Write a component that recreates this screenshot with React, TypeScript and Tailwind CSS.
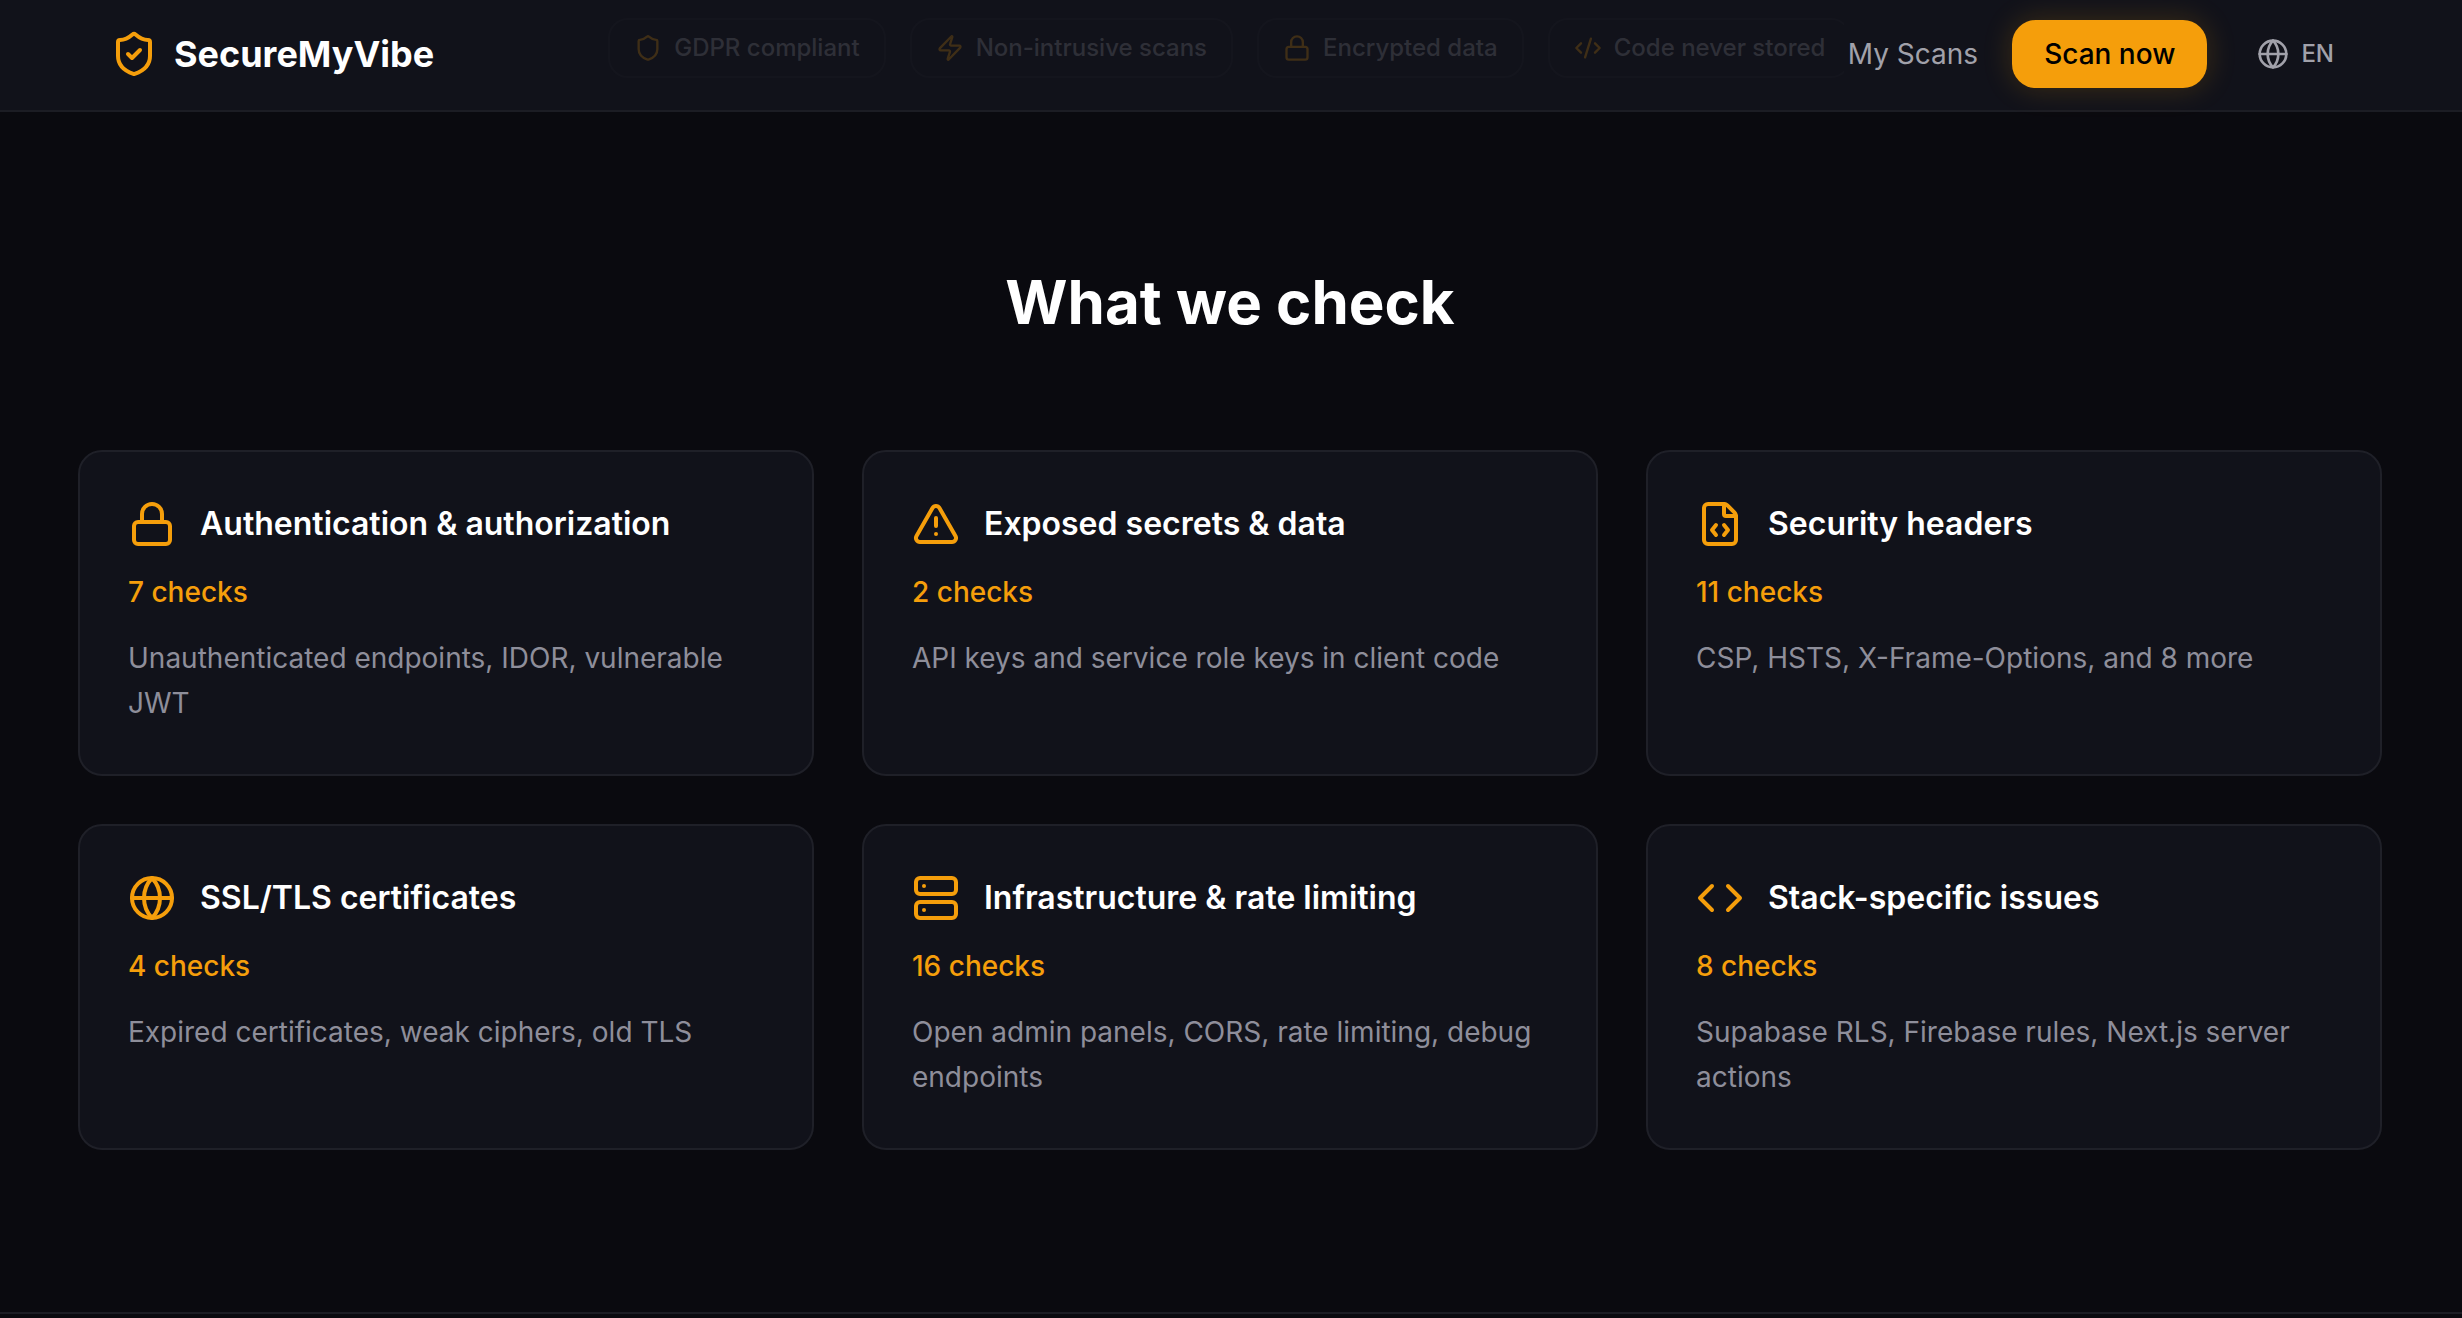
import { Code, CodeXml, FileCode, Globe, Lock, Server, Shield, ShieldCheck, TriangleAlert, Zap } from "lucide-react"

const badges = [
  { icon: Shield, label: "GDPR compliant" },
  { icon: Zap, label: "Non-intrusive scans" },
  { icon: Lock, label: "Encrypted data" },
  { icon: CodeXml, label: "Code never stored" },
]

const checks = [
  { icon: Lock, title: "Authentication & authorization", count: "7 checks", desc: "Unauthenticated endpoints, IDOR, vulnerable JWT" },
  { icon: TriangleAlert, title: "Exposed secrets & data", count: "2 checks", desc: "API keys and service role keys in client code" },
  { icon: FileCode, title: "Security headers", count: "11 checks", desc: "CSP, HSTS, X-Frame-Options, and 8 more" },
  { icon: Globe, title: "SSL/TLS certificates", count: "4 checks", desc: "Expired certificates, weak ciphers, old TLS" },
  { icon: Server, title: "Infrastructure & rate limiting", count: "16 checks", desc: "Open admin panels, CORS, rate limiting, debug endpoints" },
  { icon: Code, title: "Stack-specific issues", count: "8 checks", desc: "Supabase RLS, Firebase rules, Next.js server actions" },
]

export default function App() {
  return (
    <div className="min-h-screen bg-[#0a0a0f] font-['Inter',sans-serif]">
      <header className="flex h-[112px] items-center border-b-2 border-[#1c1d24] bg-[#11121a] pb-[2px] pl-[110px] pr-[128px]">
        <div className="flex shrink-0 items-center gap-4">
          <ShieldCheck className="h-12 w-12 text-[#f59e0b]" />
          <span className="text-[36px] font-bold text-white">SecureMyVibe</span>
        </div>

        {/* trust badges, faded out behind the nav */}
        <div className="mb-3 ml-[174px] flex min-w-0 flex-1 gap-6 overflow-hidden opacity-20">
          {badges.map((b) => (
            <div key={b.label} className="flex h-[60px] shrink-0 items-center gap-3 rounded-[20px] border-2 border-[#22232c] px-6">
              <b.icon className="h-7 w-7 text-[#f59e0b]" />
              <span className="text-[24px] font-medium text-[#a1a1aa]">{b.label}</span>
            </div>
          ))}
        </div>

        <nav className="ml-auto flex shrink-0 items-center">
          <a className="ml-1 text-[28px] text-[#a1a1aa]">My Scans</a>
          <button className="ml-[34px] h-[68px] rounded-[24px] bg-[#f59e0b] px-8 text-[28px] font-medium text-black shadow-[0_0_30px_rgba(245,158,11,0.2)]">
            Scan now
          </button>
          <div className="ml-[50px] flex items-center gap-3 text-[#a1a1aa]">
            <Globe className="h-8 w-8" />
            <span className="text-[24px] font-medium">EN</span>
          </div>
        </nav>
      </header>

      <section className="h-[1202px] border-b-2 border-[#1c1d24] pr-[2px] pt-[158px]">
        <h2 className="text-center text-[60px] font-bold leading-[64px] text-white">What we check</h2>

        <div className="mx-auto mt-[116px] grid max-w-[2304px] grid-cols-3 gap-x-12 gap-y-12">
          {checks.map((c) => (
            <div key={c.title} className="h-[326px] rounded-[24px] border-2 border-[#1f2028] bg-[#11121a] p-12">
              <div className="flex items-center gap-6">
                <c.icon className="h-12 w-12 text-[#f59e0b]" />
                <h3 className="text-[32px] font-semibold text-white">{c.title}</h3>
              </div>
              <p className="mt-6 text-[28px] font-medium leading-10 text-[#f59e0b]">{c.count}</p>
              <p className="mt-6 text-[28px] leading-[45px] text-[#8e8e9a]">{c.desc}</p>
            </div>
          ))}
        </div>
      </section>
    </div>
  )
}
